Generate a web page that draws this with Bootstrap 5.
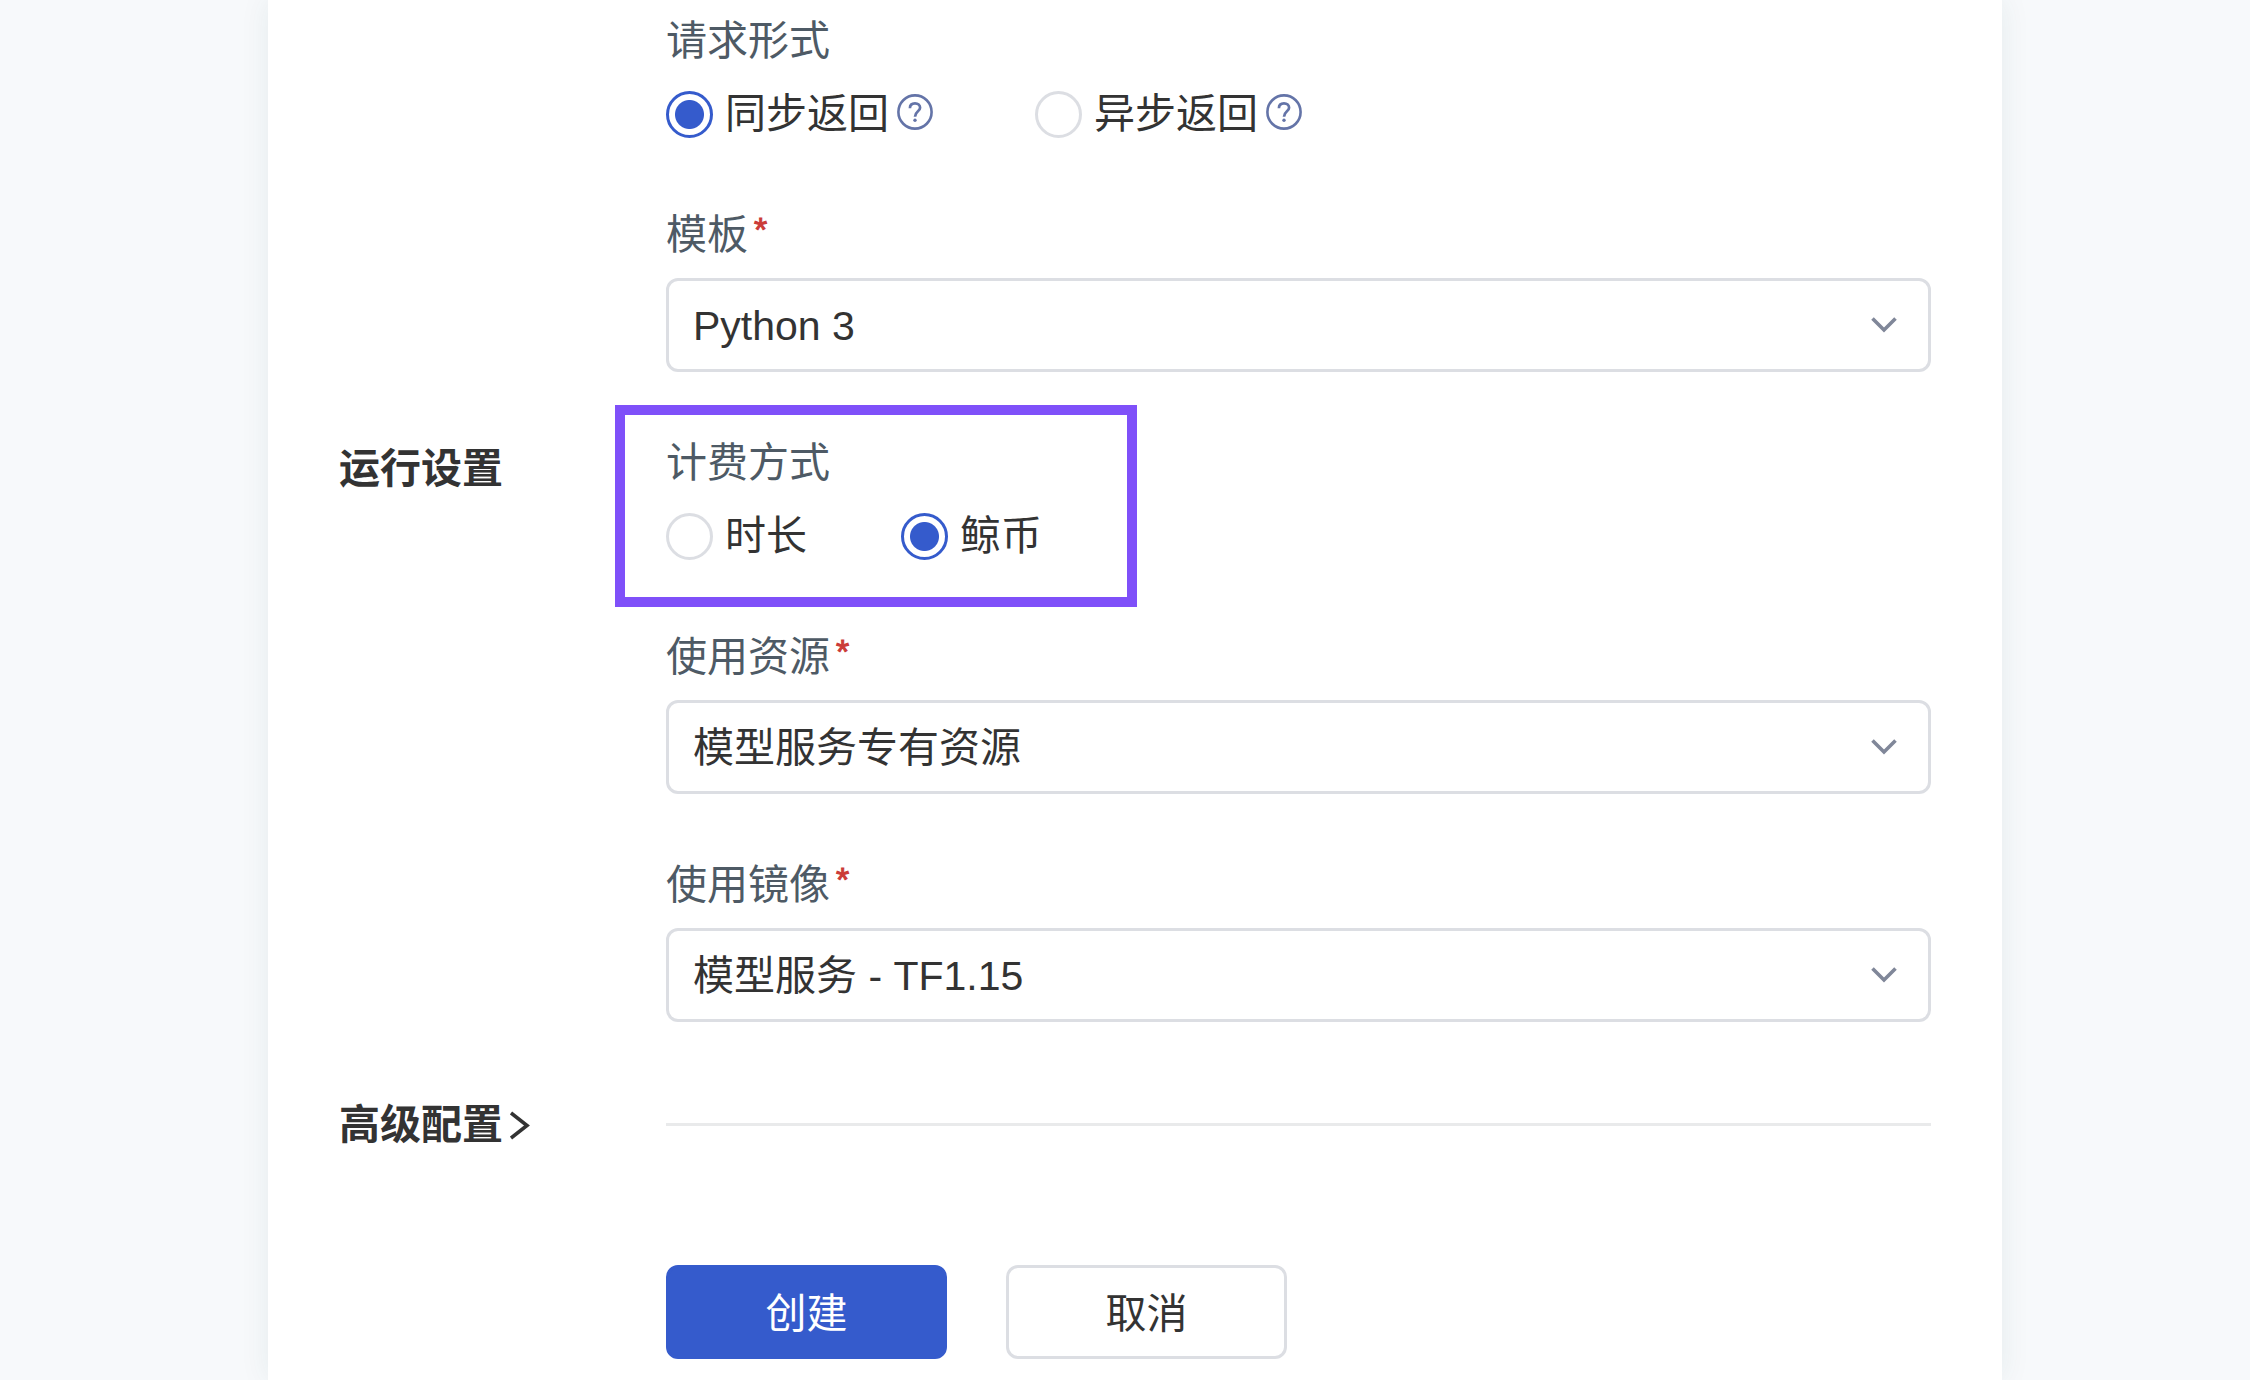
<!DOCTYPE html>
<html lang="zh-CN">
<head>
<meta charset="utf-8">
<meta name="viewport" content="width=device-width, initial-scale=1">
<title>创建模型服务</title>
<link href="https://cdn.jsdelivr.net/npm/bootstrap@5.3.0/dist/css/bootstrap.min.css" rel="stylesheet">
<style>
  body {
    background: #f7f9fb;
    color: #333;
    font-family: "Liberation Sans", "Noto Sans CJK SC", sans-serif;
    font-size: 41px;
    line-height: 60px;
  }
  .page-wrap { padding: 0 248px 0 268px; }
  .panel {
    background: #fff;
    padding: 10px 71px 21px;
    box-shadow: 0 0 28px rgba(30, 80, 80, .08);
  }
  .side { width: 327px; font-size: 41px; line-height: 60px; font-weight: 700; }
  .side-lower { padding-top: 7px; }
  .group { margin-bottom: 60px; }
  .group:last-child { margin-bottom: 0; }
  .caption { color: #4e5a65; line-height: 62px; font-size: 41px; margin-bottom: 12px; }
  .star { color: #cb3b38; font-size: 34px; line-height: 50px; margin-left: 6px; -webkit-text-stroke: 1px #cb3b38; }
  .options { gap: 94px; height: 60px; }
  .dot-radio.form-check-input {
    width: 47px; height: 47px; margin: 0 12px 0 0; flex: none;
    border: 3px solid #dcdee3; background: #fff;
  }
  .dot-radio.form-check-input:checked {
    border-color: #355bcc;
    background: radial-gradient(circle, #355bcc 14px, #fff 15px);
  }
  .help { width: 36px; height: 36px; margin: 0 8px 5px 8px; }
  .picker.form-select {
    height: 94px; padding: 2px 90px 0 24px;
    border: 3px solid #dcdee3; border-radius: 12px;
    color: #333; font-size: 41px; line-height: 60px;
    background-color: #fff;
    background-image: url("data:image/svg+xml,%3Csvg xmlns='http://www.w3.org/2000/svg' viewBox='0 0 26 16'%3E%3Cpath d='M1.5 1.5L13 13L24.5 1.5' fill='none' stroke='%23808799' stroke-width='3.6'/%3E%3C/svg%3E");
    background-size: 26px 16px;
    background-position: right 31px center;
  }
  .marker {
    top: -27px; left: -51px; width: 522px; height: 202px;
    border: 10px solid #7f50f9; pointer-events: none;
  }
  .advanced { margin-top: 71px; }
  .advanced a { color: #333; padding-top: 2px; }
  .advanced svg { width: 20px; height: 30px; margin-left: 7px; }
  .rule { border-top: 3px solid #e9eaeb; opacity: 1; }
  .actions { margin: 110px 0 0 327px; gap: 59px; }
  .action.btn {
    width: 281px; height: 94px; padding: 3px 0 0;
    border: 3px solid #dcdee3; border-radius: 12px;
    font-size: 41px; line-height: 60px; color: #333; background: #fff;
  }
  .action.btn-primary { background: #355bcc; border-color: #355bcc; color: #fff; }
</style>
</head>
<body>
<div class="page-wrap">
  <form class="panel min-vh-100">
    <section class="d-flex group">
      <div class="side flex-shrink-0"></div>
      <div class="flex-fill">
        <div class="group" role="radiogroup" aria-labelledby="cap-mode">
          <div class="caption" id="cap-mode">请求形式</div>
          <div class="options d-flex align-items-center">
            <div class="d-flex align-items-center">
              <input class="form-check-input dot-radio" type="radio" name="mode" id="sync" checked>
              <label for="sync">同步返回</label>
              <svg class="help" viewBox="0 0 36 36" fill="none" stroke="#6474a8" aria-hidden="true"><circle cx="18" cy="18" r="16.6" stroke-width="2.6"/><path d="M12.9 14.2C12.9 11 15 9.3 18 9.3S23.1 11.1 23.1 13.8C23.1 17.4 18 17.4 18 22.8" stroke-width="2.7"/><circle cx="18" cy="26.3" r="1.7" fill="#6474a8" stroke="none"/></svg>
            </div>
            <div class="d-flex align-items-center">
              <input class="form-check-input dot-radio" type="radio" name="mode" id="async">
              <label for="async">异步返回</label>
              <svg class="help" viewBox="0 0 36 36" fill="none" stroke="#6474a8" aria-hidden="true"><circle cx="18" cy="18" r="16.6" stroke-width="2.6"/><path d="M12.9 14.2C12.9 11 15 9.3 18 9.3S23.1 11.1 23.1 13.8C23.1 17.4 18 17.4 18 22.8" stroke-width="2.7"/><circle cx="18" cy="26.3" r="1.7" fill="#6474a8" stroke="none"/></svg>
            </div>
          </div>
        </div>
        <div class="group">
          <label class="caption d-flex" for="tpl">模板<span class="star">*</span></label>
          <select class="form-select picker" id="tpl"><option>Python 3</option></select>
        </div>
      </div>
    </section>

    <section class="d-flex">
      <h2 class="side side-lower flex-shrink-0 mb-0">运行设置</h2>
      <div class="flex-fill">
        <div class="group position-relative" role="radiogroup" aria-labelledby="cap-bill">
          <div class="caption" id="cap-bill">计费方式</div>
          <div class="options d-flex align-items-center">
            <div class="d-flex align-items-center">
              <input class="form-check-input dot-radio" type="radio" name="bill" id="hours">
              <label for="hours">时长</label>
            </div>
            <div class="d-flex align-items-center">
              <input class="form-check-input dot-radio" type="radio" name="bill" id="coin" checked>
              <label for="coin">鲸币</label>
            </div>
          </div>
          <div class="marker position-absolute"></div>
        </div>
        <div class="group">
          <label class="caption d-flex" for="res">使用资源<span class="star">*</span></label>
          <select class="form-select picker" id="res"><option>模型服务专有资源</option></select>
        </div>
        <div class="group">
          <label class="caption d-flex" for="img">使用镜像<span class="star">*</span></label>
          <select class="form-select picker" id="img"><option>模型服务 - TF1.15</option></select>
        </div>
      </div>
    </section>

    <section class="advanced d-flex align-items-center">
      <h2 class="side flex-shrink-0 mb-0"><a class="d-flex align-items-center text-decoration-none" href="#">高级配置<svg viewBox="0 0 20 30" fill="none" stroke="#333" stroke-width="3.6" aria-hidden="true"><path d="M1 3L17 15.5L1 28"/></svg></a></h2>
      <hr class="rule flex-fill my-0">
    </section>

    <div class="actions d-flex">
      <button class="btn btn-primary action" type="button">创建</button>
      <button class="btn action" type="button">取消</button>
    </div>
  </form>
</div>
<script src="https://cdn.jsdelivr.net/npm/bootstrap@5.3.0/dist/js/bootstrap.bundle.min.js"></script>
</body>
</html>
